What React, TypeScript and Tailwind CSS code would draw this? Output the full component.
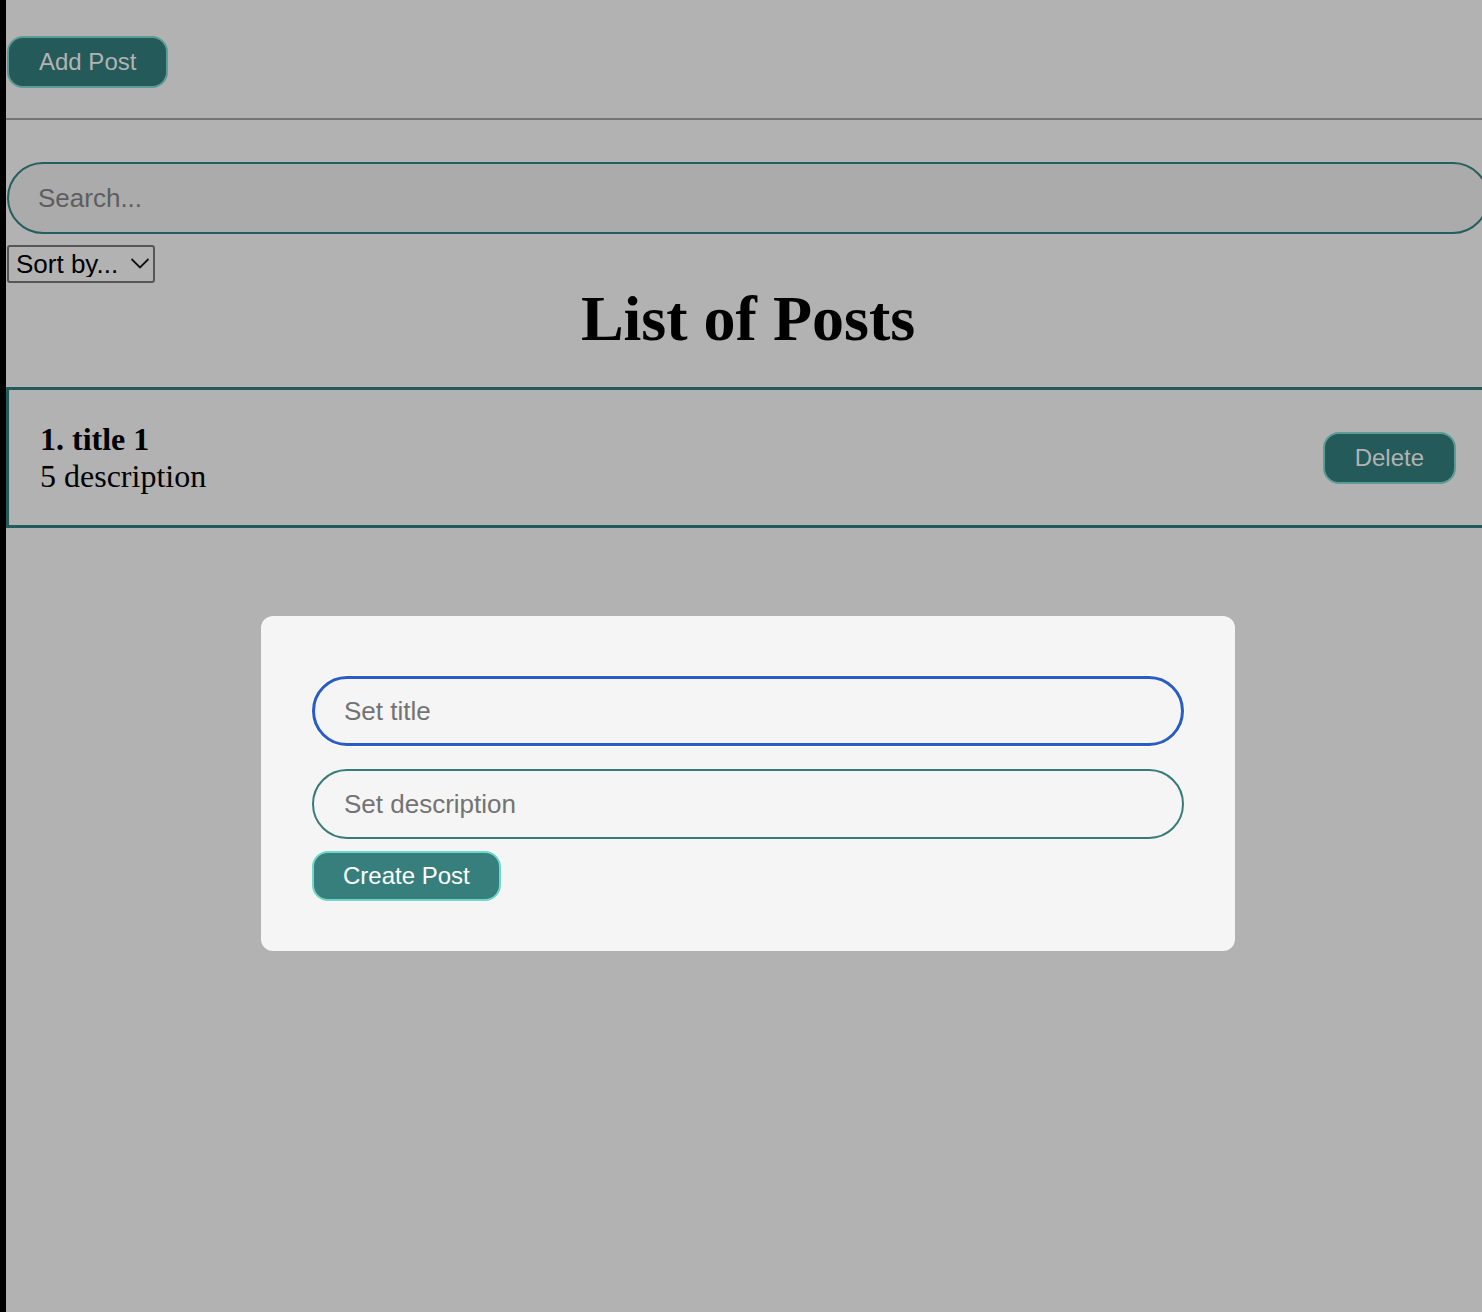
import React from "react";

export default function App() {
  const sans = { fontFamily: '"Liberation Sans", Arial, sans-serif' };
  const serif = { fontFamily: '"Liberation Serif", "Times New Roman", serif' };
  return (
    <div className="flex min-h-[1312px] w-full overflow-hidden bg-[#b2b2b2]">
      <div className="w-[6px] shrink-0 bg-black" />
      <div className="relative min-w-0 flex-1">
        <div className="pl-[1px] pt-[36px]">
          <button
            style={sans}
            className="flex h-[52px] items-center rounded-[16px] border-2 border-[#5b9c95] bg-[#245a5a] px-[30px] text-[24px] text-[#b3b3b3]"
          >
            Add Post
          </button>
        </div>
        <div className="mt-[30px] border-t-2 border-[#757575]" />
        <div className="mt-[42px] pl-[1px]">
          <input
            style={sans}
            placeholder="Search..."
            className="h-[72px] w-[1482px] rounded-full border-2 border-[#245e5e] bg-[#ababab] pl-[29px] text-[26px] text-black outline-none placeholder:text-[#5e5e5e]"
          />
        </div>
        <div className="relative mt-[11px] ml-[1px] h-[38px] w-[148px]">
          <select
            style={sans}
            className="h-full w-full appearance-none rounded-[3px] border-2 border-[#565656] bg-transparent pl-[7px] text-[26px] leading-none text-black outline-none"
          >
            <option>Sort by...</option>
          </select>
          <svg
            className="pointer-events-none absolute right-[5px] top-[12px]"
            width="20"
            height="13"
            viewBox="0 0 20 13"
          >
            <path d="M1.5 2 L10 10.5 L18.5 2" stroke="#111" strokeWidth="1.8" fill="none" />
          </svg>
        </div>
        <h1
          style={serif}
          className="m-0 pl-[8px] pt-[4px] text-center text-[64px] font-bold leading-[64px] text-black"
        >
          List of Posts
        </h1>
        <div className="mt-[36px] flex w-[1483px] items-center justify-between border-[3px] border-[#245a5a] pb-[30px] pl-[31px] pr-[30px] pt-[31px]">
          <div style={serif} className="text-[32px] leading-[37px] text-black">
            <div className="font-bold">1. title 1</div>
            <div>5 description</div>
          </div>
          <button
            style={sans}
            className="flex h-[52px] items-center rounded-[16px] border-2 border-[#5b9c95] bg-[#245a5a] px-[30px] text-[24px] text-[#b3b3b3]"
          >
            Delete
          </button>
        </div>

        <div className="absolute left-[255px] top-[616px] w-[974px] rounded-[12px] bg-[#f5f5f5] px-[51px] pb-[50px] pt-[60px]">
          <input
            style={sans}
            placeholder="Set title"
            className="block h-[70px] w-[872px] rounded-full border-[3px] border-[#2a5cc6] bg-[#f5f5f5] pl-[29px] text-[26px] text-black shadow-[0_0_0_1px_#ffffff] outline-none placeholder:text-[#737373]"
          />
          <input
            style={sans}
            placeholder="Set description"
            className="mt-[23px] block h-[70px] w-[872px] rounded-full border-2 border-[#367b78] bg-[#f5f5f5] pl-[30px] text-[26px] text-black outline-none placeholder:text-[#737373]"
          />
          <button
            style={sans}
            className="mt-[12px] flex h-[50px] items-center rounded-[16px] border-2 border-[#6fd8c8] bg-[#377f7c] px-[29px] text-[24px] text-white"
          >
            Create Post
          </button>
        </div>
      </div>
    </div>
  );
}
